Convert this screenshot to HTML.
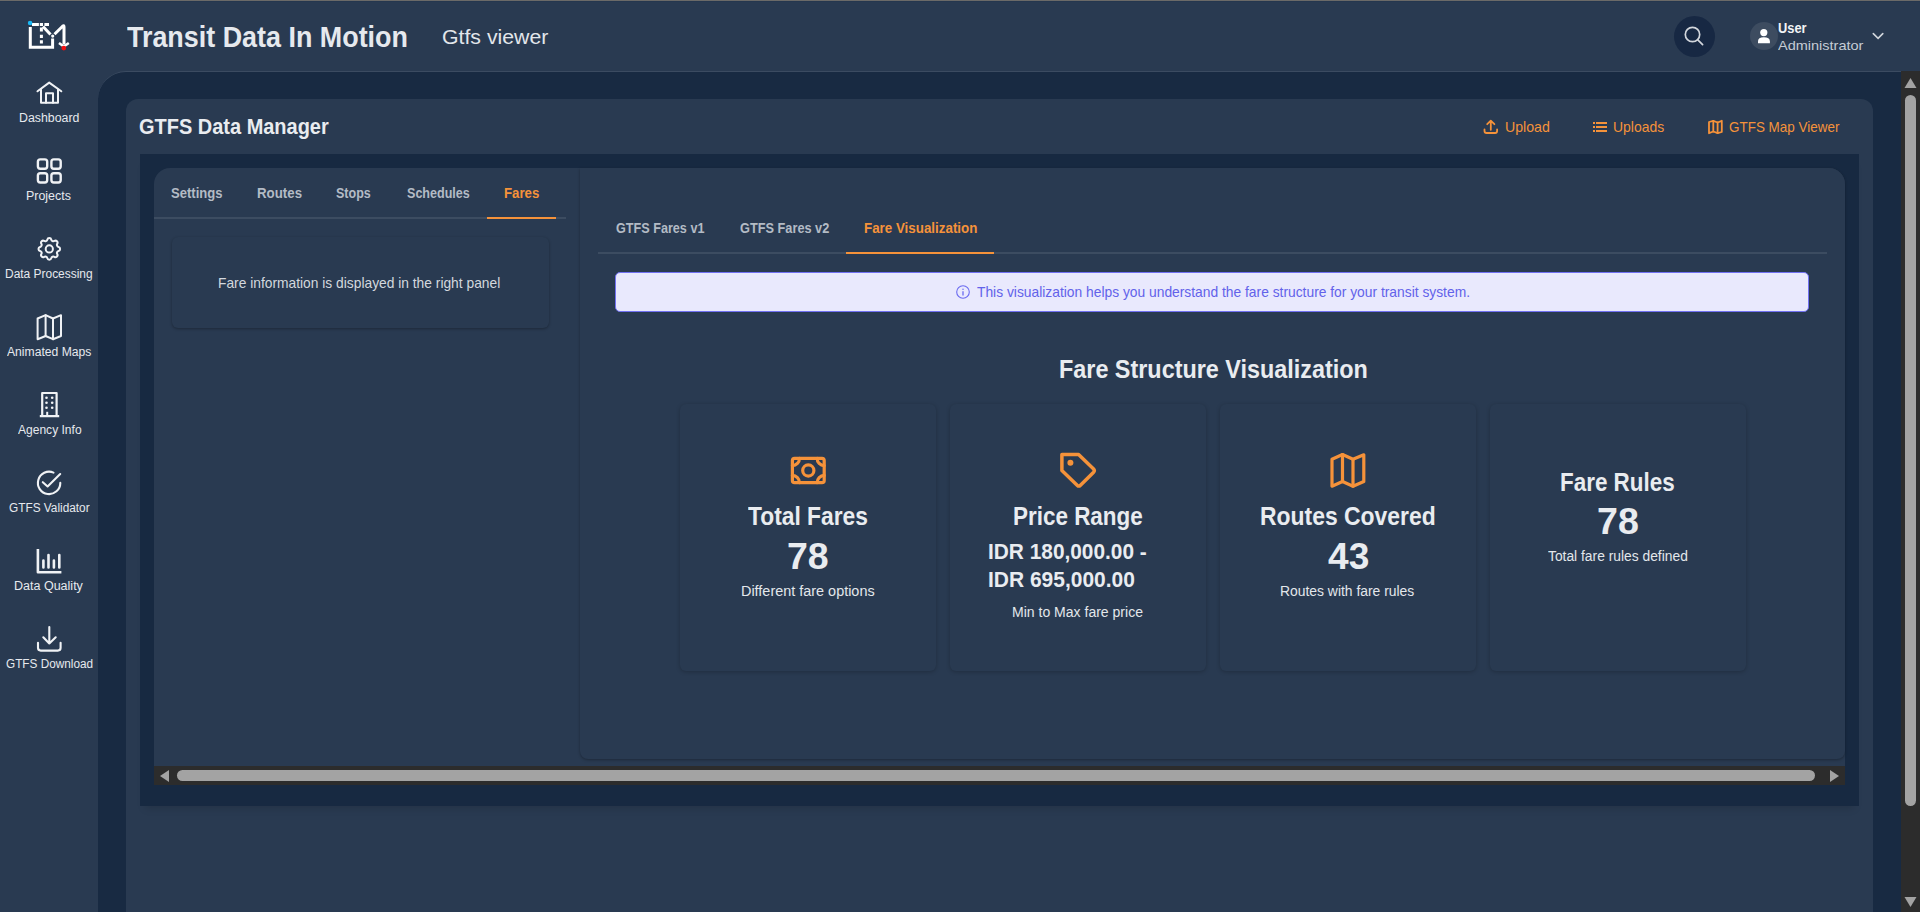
<!DOCTYPE html>
<html><head><meta charset="utf-8">
<style>
html,body{margin:0;padding:0;}
body{width:1920px;height:912px;overflow:hidden;position:relative;background:#293a51;font-family:"Liberation Sans",sans-serif;}
.a{position:absolute;box-sizing:border-box;}
.t{position:absolute;white-space:nowrap;line-height:1;transform-origin:0 0;font-family:"Liberation Sans",sans-serif;}
svg.ov{position:absolute;left:0;top:0;width:1920px;height:912px;}
</style></head><body>
<div class="a" style="left:0;top:0;width:1920px;height:1px;background:#6b6a68"></div>
<div class="a" style="left:0;top:1px;width:1920px;height:1px;background:#25374f"></div>
<!-- main area -->
<div class="a" style="left:98px;top:71px;width:1803px;height:841px;background:#182a42;border-top-left-radius:28px;border-top:1px solid #3b4b61;"></div>
<div class="a" style="left:1901px;top:71px;width:19px;height:841px;background:#2c2c2c"></div>
<div class="a" style="left:1905px;top:95px;width:11px;height:711px;background:#a3a3a3;border-radius:6px"></div>
<!-- card -->
<div class="a" style="left:126px;top:99px;width:1747px;height:830px;background:#293a51;border-radius:12px"></div>
<div class="a" style="left:140px;top:154px;width:1719px;height:652px;background:#172941;box-shadow:0 7px 8px -5px rgba(0,0,0,.15)"></div>
<div class="a" style="left:154px;top:168px;width:1691px;height:598px;background:#293a51;border-radius:16px 16px 0 0"></div>
<div class="a" style="left:154px;top:217px;width:412px;height:2px;background:#3c4c61"></div>
<div class="a" style="left:487px;top:216.75px;width:69px;height:2.5px;background:#f5923a"></div>
<div class="a" style="left:172px;top:237px;width:377px;height:91px;background:#293a51;border-radius:6px;box-shadow:0 1px 3px rgba(0,0,0,.3)"></div>
<div class="a" style="left:580px;top:168px;width:1265px;height:591px;background:#293a51;border-radius:0 16px 8px 8px;box-shadow:0 1px 3px rgba(0,0,0,.3)"></div>
<div class="a" style="left:598px;top:252px;width:1229px;height:2px;background:#3c4c61"></div>
<div class="a" style="left:846px;top:251.75px;width:148px;height:2.5px;background:#f5923a"></div>
<div class="a" style="left:615px;top:272px;width:1194px;height:40px;background:#e9e9fd;border:1px solid #7171f2;border-radius:5px"></div>
<div class="a" style="left:680px;top:404px;width:256px;height:267px;background:#293a51;border-radius:6px;box-shadow:0 1px 4px rgba(0,0,0,.22)"></div>
<div class="a" style="left:950px;top:404px;width:256px;height:267px;background:#293a51;border-radius:6px;box-shadow:0 1px 4px rgba(0,0,0,.22)"></div>
<div class="a" style="left:1220px;top:404px;width:256px;height:267px;background:#293a51;border-radius:6px;box-shadow:0 1px 4px rgba(0,0,0,.22)"></div>
<div class="a" style="left:1490px;top:404px;width:256px;height:267px;background:#293a51;border-radius:6px;box-shadow:0 1px 4px rgba(0,0,0,.22)"></div>
<!-- h scrollbar -->
<div class="a" style="left:154px;top:766px;width:1691px;height:19px;background:#2c2c2c"></div>
<div class="a" style="left:177px;top:770px;width:1638px;height:11px;background:#a3a3a3;border-radius:6px"></div>
<!-- search & avatar -->
<div class="a" style="left:1673.5px;top:15.5px;width:41px;height:41px;background:#172843;border-radius:50%"></div>
<div class="a" style="left:1749.75px;top:21.7px;width:28px;height:28px;background:#3d4c60;border-radius:50%"></div>

<svg class="ov" viewBox="0 0 1920 912">
<!-- scroll arrows -->
<polygon points="1910.5,78 1904.5,88 1916.5,88" fill="#a3a3a3"/>
<polygon points="1910.5,907 1904.5,897 1916.5,897" fill="#a3a3a3"/>
<polygon points="160,776 169,770 169,782" fill="#a3a3a3"/>
<polygon points="1839,776 1830,770 1830,782" fill="#a3a3a3"/>
<!-- logo -->
<g fill="none" stroke="#ffffff" stroke-width="3">
<path d="M30.3 27 V47.3 H52.6 V38.5"/>
<path d="M32 24.5 H38.9 M39.8 24.5 H43 M44.4 24.5 H49"/>
<path d="M41.4 27.4 V31.5 M41.4 34.7 V38 M41.4 40.3 V43.5"/>
<path d="M43 26.5 L50.5 34.5"/>
<path d="M54.5 34.3 L62.6 26.2 Q64 25 64 26.8 V44.5" stroke-linejoin="round"/>
<path d="M59 43 L63.8 46.5 L68.8 43" stroke-width="2.6"/>
</g>
<circle cx="52.7" cy="36.1" r="1.6" fill="#fff"/>
<circle cx="30.1" cy="23" r="2.3" fill="#1ab8f5"/>
<circle cx="63.8" cy="48.1" r="2.4" fill="#f01010"/>
<!-- sidebar icons -->
<g fill="none" stroke="#f0f2f5" stroke-width="2" stroke-linejoin="round" stroke-linecap="round">
<path d="M37.5 91.3 L49.2 82.6 L61.3 91.3"/>
<path d="M41 89.5 V102.8 H58 V89.5"/>
<path d="M46 102.8 V93.2 H53 V102.8"/>
<rect x="37.9" y="159.4" width="9.3" height="9.3" rx="2.4" stroke-width="2.4"/>
<rect x="51.4" y="159.4" width="9.3" height="9.3" rx="2.4" stroke-width="2.4"/>
<rect x="37.9" y="173.2" width="9.3" height="9.3" rx="2.4" stroke-width="2.4"/>
<rect x="51.4" y="173.2" width="9.3" height="9.3" rx="2.4" stroke-width="2.4"/>
<g transform="translate(34.9 234.5) scale(1.2)" stroke-width="1.7"><path d="M10.325 4.317c.426 -1.756 2.924 -1.756 3.35 0a1.724 1.724 0 0 0 2.573 1.066c1.543 -.94 3.31 .826 2.37 2.37a1.724 1.724 0 0 0 1.065 2.572c1.756 .426 1.756 2.924 0 3.35a1.724 1.724 0 0 0 -1.066 2.573c.94 1.543 -.826 3.31 -2.37 2.37a1.724 1.724 0 0 0 -2.572 1.065c-.426 1.756 -2.924 1.756 -3.35 0a1.724 1.724 0 0 0 -2.573 -1.066c-1.543 .94 -3.31 -.826 -2.37 -2.37a1.724 1.724 0 0 0 -1.065 -2.572c-1.756 -.426 -1.756 -2.924 0 -3.35a1.724 1.724 0 0 0 1.066 -2.573c-.94 -1.543 .826 -3.31 2.37 -2.37c1 .608 2.296 .07 2.572 -1.065z"/></g>
<circle cx="49.3" cy="248.9" r="3.6" stroke-width="2"/>
<path d="M37.6 318.5 L45.6 315.2 L53 318.5 L61 315.2 V336 L53 339.2 L45.6 336 L37.6 339.2 Z"/>
<path d="M45.6 315.2 V336 M53 318.5 V339.2"/>
<path d="M42.2 415.5 V393 H56.6 V415.5 M39.8 416.2 H59.2" stroke-width="2.2" stroke-linecap="butt"/>
<path d="M47.2 411.8 V415.3" stroke-width="2" stroke-linecap="butt"/>
<path d="M60.3 482.9 A11.2 11.2 0 1 1 53.5 472.6" stroke-width="2.1"/>
<path d="M42.8 482.2 L47.6 486.5 L60.2 474" stroke-width="2.1"/>
<path d="M37.9 549 V572.3 H61.4" stroke-width="2.6" stroke-linecap="butt"/>
<path d="M43.4 560.5 V567.4 M48.5 555 V567.4 M53.9 560.5 V567.4 M59.3 555 V567.4" stroke-width="2.6"/>
<path d="M49.3 627 V643.5 M43.3 637.3 L49.3 643.5 L55.7 637.3" stroke-width="2.1"/>
<path d="M38 642.7 V647.8 Q38 650.6 40.8 650.6 H57.8 Q60.6 650.6 60.6 647.8 V642.7" stroke-width="2.1"/>
</g>
<g fill="#f0f2f5">
<circle cx="46.5" cy="397.8" r="1.3"/><circle cx="52.2" cy="397.8" r="1.3"/>
<circle cx="46.5" cy="402.8" r="1.3"/><circle cx="52.2" cy="402.8" r="1.3"/>
<circle cx="46.5" cy="407.7" r="1.3"/><circle cx="52.2" cy="407.7" r="1.3"/>
</g>
<!-- header icons -->
<g fill="none" stroke="#d2d6dc" stroke-width="1.7" stroke-linecap="round">
<circle cx="1692.5" cy="34.5" r="7.2"/>
<path d="M1697.8 39.8 L1702.6 44.6"/>
<path d="M1873.3 33.6 L1878.1 38.3 L1882.8 33.6" stroke-width="1.6"/>
</g>
<circle cx="1763.8" cy="32.6" r="3.6" fill="#ffffff"/>
<path d="M1758 43.2 V41.5 Q1758 37.3 1763.8 37.3 Q1769.9 37.3 1769.9 41.5 V43.2 Z" fill="#ffffff"/>
<!-- card header icons -->
<g fill="none" stroke="#f5923a" stroke-width="1.8" stroke-linecap="round" stroke-linejoin="round">
<path d="M1490.8 121 V129.8 M1487.2 124.2 L1490.8 120.6 L1494.4 124.2"/>
<path d="M1484.5 129.3 V131 Q1484.5 133 1486.5 133 H1495.1 Q1497.1 133 1497.1 131 V129.3"/>
<g fill="#f5923a" stroke="none"><rect x="1593" y="122" width="2" height="2"/><rect x="1596" y="122" width="11" height="2"/><rect x="1593" y="126" width="2" height="2"/><rect x="1596" y="126" width="11" height="2"/><rect x="1593" y="130" width="2" height="2"/><rect x="1596" y="130" width="11" height="2"/></g>
<path d="M1709 122 L1713.3 120.8 L1717.6 122.5 L1721.8 120.8 V132 L1717.6 133.2 L1713.3 131.5 L1709 133.2 Z"/>
<path d="M1713.3 120.8 V131.5 M1717.6 122.5 V133.2"/>
</g>
<!-- info icon -->
<g fill="none" stroke="#6a6af0" stroke-width="1.1">
<circle cx="963" cy="292" r="6.3"/>
<path d="M963 291.3 V295.6" stroke-width="1.3"/>
</g>
<circle cx="963" cy="289.2" r="0.75" fill="#6a6af0"/>
<!-- card icons -->
<g fill="none" stroke="#f5923a" stroke-width="3.2" stroke-linecap="round" stroke-linejoin="round">
<rect x="792.4" y="458.4" width="31.8" height="24.2" rx="2.2"/>
<circle cx="808.3" cy="470.5" r="5.6"/>
<path d="M792.4 465.6 A7 7 0 0 0 799.4 458.4 M817.2 458.4 A7 7 0 0 0 824.2 465.6 M824.2 475.4 A7 7 0 0 0 817.2 482.6 M799.4 482.6 A7 7 0 0 0 792.4 475.4"/>
<path d="M1061.9 454.6 H1078.6 L1093.6 469 Q1095 470.6 1093.6 472.2 L1080.2 485.4 Q1078.8 486.8 1077.4 485.4 L1061.9 470.6 Z" stroke-width="3.5"/>
<path d="M1332 459.3 L1342.5 454.5 L1353 459.3 L1363.8 454.8 V481.5 L1353 486.2 L1342.5 481.5 L1332 486.2 Z"/>
<path d="M1342.5 454.5 V481.5 M1353 459.3 V486.2"/>
</g>
<circle cx="1070.4" cy="462.8" r="3" fill="#f5923a"/>
</svg>
<div class='t' style='left:126.50px;top:21.50px;font-size:30px;font-weight:700;color:#e6e9ee;transform:scaleX(0.8966)'>Transit Data In Motion</div>
<div class='t' style='left:441.69px;top:26.12px;font-size:21px;font-weight:400;color:#e2e6eb;transform:scaleX(1.0125)'>Gtfs viewer</div>
<div class='t' style='left:1778.20px;top:21.15px;font-size:14px;font-weight:700;color:#f2f4f6;transform:scaleX(0.9194)'>User</div>
<div class='t' style='left:1777.80px;top:38.97px;font-size:13.5px;font-weight:400;color:#c5ccd5;transform:scaleX(1.0744)'>Administrator</div>
<div class='t' style='left:18.87px;top:111.84px;font-size:12px;font-weight:400;color:#e6e9ee;transform:scaleX(1.0281)'>Dashboard</div>
<div class='t' style='left:26.41px;top:189.84px;font-size:12px;font-weight:400;color:#e6e9ee;transform:scaleX(1.0357)'>Projects</div>
<div class='t' style='left:4.90px;top:267.84px;font-size:12px;font-weight:400;color:#e6e9ee;transform:scaleX(0.9954)'>Data Processing</div>
<div class='t' style='left:7.20px;top:345.84px;font-size:12px;font-weight:400;color:#e6e9ee;transform:scaleX(1.0120)'>Animated Maps</div>
<div class='t' style='left:17.60px;top:423.84px;font-size:12px;font-weight:400;color:#e6e9ee;transform:scaleX(1.0032)'>Agency Info</div>
<div class='t' style='left:8.80px;top:501.84px;font-size:12px;font-weight:400;color:#e6e9ee;transform:scaleX(0.9854)'>GTFS Validator</div>
<div class='t' style='left:14.26px;top:579.84px;font-size:12px;font-weight:400;color:#e6e9ee;transform:scaleX(1.0431)'>Data Quality</div>
<div class='t' style='left:6.00px;top:657.84px;font-size:12px;font-weight:400;color:#e6e9ee;transform:scaleX(0.9818)'>GTFS Download</div>
<div class='t' style='left:139.26px;top:116.45px;font-size:21.2px;font-weight:700;color:#e9ecf0;transform:scaleX(0.9425)'>GTFS Data Manager</div>
<div class='t' style='left:1504.64px;top:120.47px;font-size:14.8px;font-weight:400;color:#f5923a;transform:scaleX(0.9556)'>Upload</div>
<div class='t' style='left:1613.26px;top:120.47px;font-size:14.8px;font-weight:400;color:#f5923a;transform:scaleX(0.9415)'>Uploads</div>
<div class='t' style='left:1729.20px;top:120.47px;font-size:14.8px;font-weight:400;color:#f5923a;transform:scaleX(0.9090)'>GTFS Map Viewer</div>
<div class='t' style='left:171.40px;top:185.22px;font-size:15.1px;font-weight:700;color:#b3bbc5;transform:scaleX(0.8644)'>Settings</div>
<div class='t' style='left:257.02px;top:185.22px;font-size:15.1px;font-weight:700;color:#b3bbc5;transform:scaleX(0.8800)'>Routes</div>
<div class='t' style='left:336.20px;top:185.22px;font-size:15.1px;font-weight:700;color:#b3bbc5;transform:scaleX(0.8286)'>Stops</div>
<div class='t' style='left:406.60px;top:185.22px;font-size:15.1px;font-weight:700;color:#b3bbc5;transform:scaleX(0.8320)'>Schedules</div>
<div class='t' style='left:503.72px;top:185.22px;font-size:15.1px;font-weight:700;color:#f5923a;transform:scaleX(0.8769)'>Fares</div>
<div class='t' style='left:218.45px;top:275.63px;font-size:14.5px;font-weight:400;color:#d3d8de;transform:scaleX(0.9515)'>Fare information is displayed in the right panel</div>
<div class='t' style='left:615.60px;top:220.40px;font-size:15px;font-weight:700;color:#b3bbc5;transform:scaleX(0.8419)'>GTFS Fares v1</div>
<div class='t' style='left:739.50px;top:220.40px;font-size:15px;font-weight:700;color:#b3bbc5;transform:scaleX(0.8500)'>GTFS Fares v2</div>
<div class='t' style='left:863.61px;top:220.40px;font-size:15px;font-weight:700;color:#f5923a;transform:scaleX(0.8909)'>Fare Visualization</div>
<div class='t' style='left:976.90px;top:284.63px;font-size:14.5px;font-weight:400;color:#6262ea;transform:scaleX(0.9528)'>This visualization helps you understand the fare structure for your transit system.</div>
<div class='t' style='left:1058.90px;top:355.89px;font-size:26px;font-weight:700;color:#e9ecf0;transform:scaleX(0.8991)'>Fare Structure Visualization</div>
<div class='t' style='left:748.20px;top:503.98px;font-size:25.9px;font-weight:700;color:#e9ecf0;transform:scaleX(0.8809)'>Total Fares</div>
<div class='t' style='left:787.29px;top:537.68px;font-size:37px;font-weight:700;color:#e9ecf0;transform:scaleX(1.0128)'>78</div>
<div class='t' style='left:740.57px;top:583.95px;font-size:14px;font-weight:400;color:#e3e7eb;transform:scaleX(1.0302)'>Different fare options</div>
<div class='t' style='left:1012.83px;top:503.98px;font-size:25.9px;font-weight:700;color:#e9ecf0;transform:scaleX(0.8669)'>Price Range</div>
<div class='t' style='left:988.05px;top:541.28px;font-size:22px;font-weight:700;color:#e9ecf0;transform:scaleX(0.9476)'>IDR 180,000.00 -</div>
<div class='t' style='left:988.05px;top:569.38px;font-size:22px;font-weight:700;color:#e9ecf0;transform:scaleX(0.9529)'>IDR 695,000.00</div>
<div class='t' style='left:1011.75px;top:605.15px;font-size:14px;font-weight:400;color:#e3e7eb;transform:scaleX(1.0019)'>Min to Max fare price</div>
<div class='t' style='left:1260.02px;top:503.98px;font-size:25.9px;font-weight:700;color:#e9ecf0;transform:scaleX(0.8847)'>Routes Covered</div>
<div class='t' style='left:1327.70px;top:537.68px;font-size:37px;font-weight:700;color:#e9ecf0;transform:scaleX(1.0025)'>43</div>
<div class='t' style='left:1280.01px;top:583.95px;font-size:14px;font-weight:400;color:#e3e7eb;transform:scaleX(0.9918)'>Routes with fare rules</div>
<div class='t' style='left:1560.13px;top:469.88px;font-size:25.9px;font-weight:700;color:#e9ecf0;transform:scaleX(0.8664)'>Fare Rules</div>
<div class='t' style='left:1596.98px;top:503.28px;font-size:37px;font-weight:700;color:#e9ecf0;transform:scaleX(1.0154)'>78</div>
<div class='t' style='left:1547.80px;top:549.25px;font-size:14px;font-weight:400;color:#e3e7eb;transform:scaleX(0.9872)'>Total fare rules defined</div>
</body></html>
